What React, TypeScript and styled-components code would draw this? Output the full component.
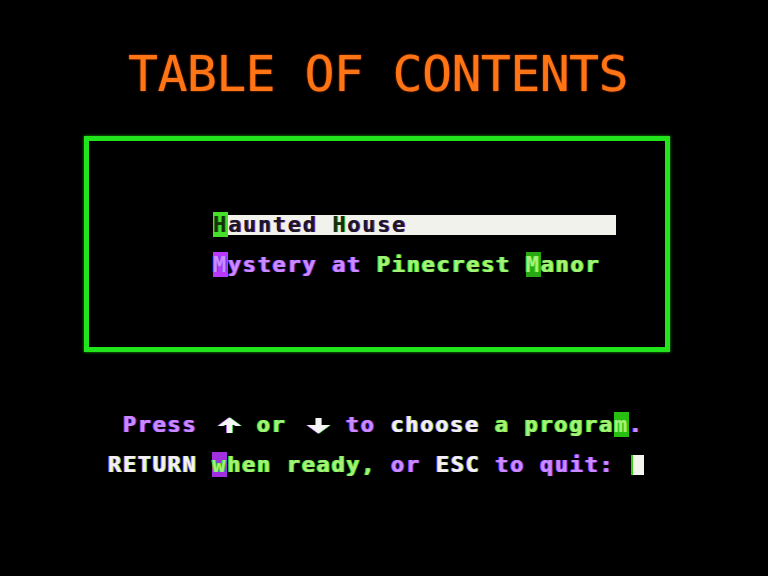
import React from 'react';
import styled, { createGlobalStyle, css } from 'styled-components';

const GlobalStyle = createGlobalStyle`
	html, body {
		margin: 0;
		padding: 0;
		background: #000;
	}
`;

type Tone = 'purple' | 'green' | 'white' | 'dark' | 'darkGreen';

const tones: Record<Tone, ReturnType<typeof css>> = {
	purple: css`
		color: #c98cff;
		text-shadow: -1px 0 #9a3cff, 1px 0 #7a2cd8;
	`,
	green: css`
		color: #a8f07c;
		text-shadow: 1px 0 #2cc814, -1px 0 #3ad01c;
	`,
	white: css`
		color: #f4f0f6;
		text-shadow: -1px 0 #b070f0, 1px 0 #60d050;
	`,
	dark: css`
		color: #1c1624;
		text-shadow: 1px 0 #7a40b0;
	`,
	darkGreen: css`
		color: #16300c;
		text-shadow: 1px 0 #30b018;
	`,
};

const Screen = styled.div`
	width: 768px;
	height: 576px;
	background: #000;
	display: flex;
	flex-direction: column;
	align-items: flex-start;
	font-family: 'DejaVu Sans Mono', 'Liberation Mono', monospace;
	font-weight: bold;
	overflow: hidden;
`;

const Title = styled.h1`
	margin: 49px 0 0 128px;
	font-family: inherit;
	font-weight: normal;
	font-size: 50px;
	line-height: 50px;
	letter-spacing: -0.7px;
	color: #ff7414;
	text-shadow: 0 0 2px #c84800;
	white-space: pre;
`;

const Frame = styled.div`
	margin: 37px 0 0 84px;
	width: 586px;
	height: 216px;
	box-sizing: border-box;
	border: 5px solid #22e41c;
	box-shadow: 0 0 3px #18a010;
	padding: 74px 0 0 124px;
	display: flex;
	flex-direction: column;
	gap: 20px;
`;

const Row = styled.div<{ $selected?: boolean }>`
	height: 20px;
	font-size: 22px;
	line-height: 20px;
	letter-spacing: 1.65px;
	white-space: pre;
	${(p) =>
		p.$selected &&
		css`
			width: 403px;
			background: #f2f2ec;
			box-shadow: inset 2px 0 #4ee030;
		`}
`;

const Word = styled.span<{ $tone: Tone; $block?: string }>`
	${(p) => tones[p.$tone]}
	${(p) =>
		p.$block &&
		css`
			background: ${p.$block};
		`}
`;

const Prompt = styled.div`
	margin: 63px 0 0 108px;
	display: flex;
	flex-direction: column;
	gap: 20px;
`;

const Cursor = styled.span`
	display: inline-block;
	width: 13px;
	height: 20px;
	vertical-align: top;
	margin-left: 2px;
	background: #f4f6ee;
	box-shadow: inset 2px 0 #3ad01c;
`;

const ArrowSvg = styled.svg`
	display: inline-block;
	vertical-align: top;
	width: 29.5px;
	height: 20px;
	filter: drop-shadow(-1px 0 #a060e8) drop-shadow(1px 0 #50c840);
`;

const Arrow = ({ dir }: { dir: 'up' | 'down' }) => (
	<ArrowSvg viewBox="0 0 29.5 20" aria-label={dir === 'up' ? '↑' : '↓'}>
		{dir === 'up' ? (
			<>
				<polygon points="6,11 17.5,2.5 29,11 24,11 17.5,6.5 11,11" fill="#f6f4f6" />
				<polygon points="9,10 17.5,4 26,10" fill="#f6f4f6" />
				<rect x="15" y="6" width="5" height="12" fill="#f6f4f6" />
			</>
		) : (
			<>
				<rect x="15" y="3" width="5" height="12" fill="#f6f4f6" />
				<polygon points="6,10 17.5,18.5 29,10" fill="#f6f4f6" />
			</>
		)}
	</ArrowSvg>
);

const App = () => {
	return (
		<Screen>
			<GlobalStyle />
			<Title>TABLE OF CONTENTS</Title>
			<Frame>
				<Row $selected>
					<Word $tone="darkGreen" $block="#46e02a">H</Word>
					<Word $tone="dark">aunted </Word>
					<Word $tone="darkGreen">H</Word>
					<Word $tone="dark">ouse</Word>
				</Row>
				<Row>
					<Word $tone="purple" $block="#b838ff">M</Word>
					<Word $tone="purple">ystery at </Word>
					<Word $tone="green">Pinecrest </Word>
					<Word $tone="green" $block="#2aa814">M</Word>
					<Word $tone="green">anor</Word>
				</Row>
			</Frame>
			<Prompt>
				<Row>
					<Word $tone="purple"> Press </Word>
					<Arrow dir="up" />
					<Word $tone="green"> or </Word>
					<Arrow dir="down" />
					<Word $tone="purple"> to </Word>
					<Word $tone="white">choose </Word>
					<Word $tone="green">a progra</Word>
					<Word $tone="green" $block="#28c010">m</Word>
					<Word $tone="purple">.</Word>
				</Row>
				<Row>
					<Word $tone="white">RETURN </Word>
					<Word $tone="green" $block="#a030e0">w</Word>
					<Word $tone="green">hen ready, </Word>
					<Word $tone="purple">or </Word>
					<Word $tone="white">ESC </Word>
					<Word $tone="purple">to quit: </Word>
					<Cursor />
				</Row>
			</Prompt>
		</Screen>
	);
};

export default App;
